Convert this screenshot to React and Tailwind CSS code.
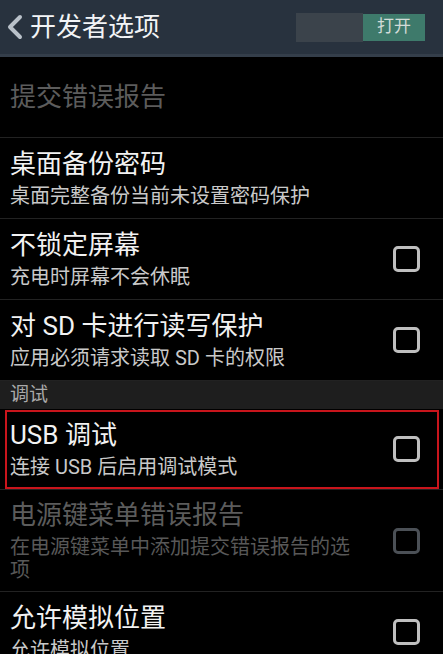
import React from 'react';

const font = { fontFamily: '"Roboto", "Noto Sans CJK SC", sans-serif' };

const Checkbox = ({ disabled }) => (
  <div
    className={`w-[27px] h-[26px] rounded-[5px] border-[3px] shrink-0 ${
      disabled ? 'border-[#4b5056]' : 'border-[#bfbfbf]'
    }`}
  />
);

const Row = ({ title, sub, check, disabled, tall, highlight }) => (
  <div
    className={`relative flex items-center border-b border-[#222] pl-[10px] pr-[23px] ${
      tall ? 'h-[102px]' : 'h-[81px]'
    }`}
  >
    <div className="flex-1 min-w-0 pr-[40px]">
      <div className={`text-[26px] leading-[30px] ${disabled ? 'text-[#5c5c5c]' : 'text-[#f2f2f2]'}`}>
        {title}
      </div>
      {sub && (
        <div
          className={`mt-[6px] text-[20px] leading-[23px] ${disabled ? 'text-[#585858]' : 'text-[#c9c9c9]'}`}
        >
          {sub}
        </div>
      )}
    </div>
    {check && <Checkbox disabled={disabled} />}
    {highlight && (
      <div className="absolute left-[5px] right-[4px] top-[1px] bottom-[0px] border-2 border-[#c9151c] pointer-events-none" />
    )}
  </div>
);

export default function App() {
  return (
    <div className="w-[443px] h-[654px] overflow-hidden bg-black" style={font}>
      {/* 顶栏 */}
      <div className="h-[57px] bg-[#28323e] border-b-[3px] border-[#343e4a] flex items-center">
        <svg width="26" height="30" viewBox="0 0 26 30" className="ml-[2px]">
          <path d="M18 5 L8 15 L18 25" fill="none" stroke="#b9c1c9" strokeWidth="4" strokeLinecap="round" strokeLinejoin="round" />
        </svg>
        <div className="ml-[2px] text-[26px] leading-[30px] text-[#f2f4f6]">开发者选项</div>
        <div className="ml-auto mr-[18px] flex items-center h-[29px]">
          <div className="w-[67px] h-[29px] bg-[#3b434b]" />
          <div className="w-[62px] h-[27px] bg-[#3e7a6b] flex items-center justify-center text-[17px] text-[#d3dcd8]">
            打开
          </div>
        </div>
      </div>

      <div className="h-[81px] flex items-center pl-[10px] border-b border-[#222]">
        <div className="text-[26px] leading-[30px] text-[#5c5c5c]">提交错误报告</div>
      </div>
      <Row title="桌面备份密码" sub="桌面完整备份当前未设置密码保护" />
      <Row title="不锁定屏幕" sub="充电时屏幕不会休眠" check />
      <Row title="对 SD 卡进行读写保护" sub="应用必须请求读取 SD 卡的权限" check />

      <div className="h-[28px] bg-[#1e1e1e] flex items-center pl-[10px] text-[19px] text-[#a9a9a9]">
        调试
      </div>

      <Row title="USB 调试" sub="连接 USB 后启用调试模式" check highlight />
      <Row title="电源键菜单错误报告" sub="在电源键菜单中添加提交错误报告的选项" check disabled tall />
      <Row title="允许模拟位置" sub="允许模拟位置" check />
    </div>
  );
}
